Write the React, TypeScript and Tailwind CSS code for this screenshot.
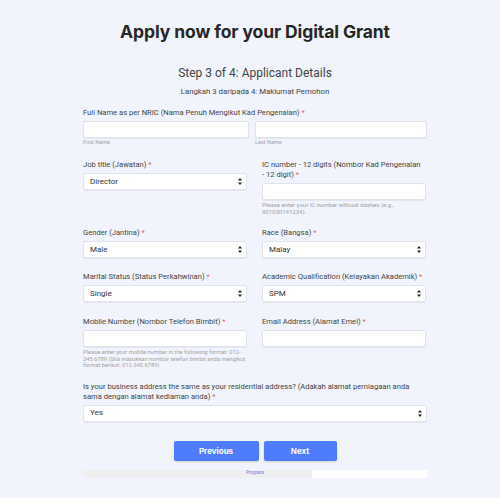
import React from 'react';

const Req = () => <span className="text-[#e5615f]"> *</span>;

const Label: React.FC<{ children: React.ReactNode; required?: boolean }> = ({ children, required }) => (
  <div className="text-[7.6px] leading-[10px] text-[#454545] mb-[3px]">
    {children}
    {required && <Req />}
  </div>
);

const Help: React.FC<{ children: React.ReactNode; small?: boolean }> = ({ children, small }) => (
  <div className={`mt-[2px] leading-[6.5px] text-[#a3a3a3] ${small ? 'text-[5.75px]' : 'text-[6px]'}`}>{children}</div>
);

const Input = () => (
  <div className="h-[17px] bg-white border border-[#e1e3e8] rounded-[2px] shadow-[0_1px_1px_rgba(0,0,0,0.06)]" />
);

const Select: React.FC<{ value: string }> = ({ value }) => (
  <div className="h-[17px] bg-white border border-[#e1e3e8] rounded-[2px] shadow-[0_1px_1px_rgba(0,0,0,0.06)] flex items-center justify-between pl-[6px] pr-[4px]">
    <span className="text-[8px] text-[#333]">{value}</span>
    <svg width="4" height="7" viewBox="0 0 4 7">
      <path d="M2 0 L4 2.6 L0 2.6 Z" fill="#222" />
      <path d="M0 4.4 L4 4.4 L2 7 Z" fill="#222" />
    </svg>
  </div>
);

export default function App() {
  return (
    <div className="min-h-[498px] bg-[#f1f4fc] font-['Roboto',sans-serif] pt-[21px]">
      <div className="ml-[83px] w-[344px]">
        <h1 className="text-center font-['Inter',sans-serif] font-bold text-[17.5px] leading-[22px] text-[#272727] tracking-[-0.1px]">
          Apply now for your Digital Grant
        </h1>
        <h2 className="mt-[22px] text-center text-[12px] leading-[16px] text-[#444]">
          Step 3 of 4: Applicant Details
        </h2>
        <p className="mt-[6px] text-center text-[7.8px] leading-[10px] text-[#444]">
          Langkah 3 daripada 4: Maklumat Pemohon
        </p>

        <div className="mt-[11px]">
          <Label required>Full Name as per NRIC (Nama Penuh Mengikut Kad Pengenalan)</Label>
          <div className="flex gap-[6px]">
            <div className="w-[166px]">
              <Input />
              <div className="text-[5.5px] leading-[8px] text-[#a3a3a3]">First Name</div>
            </div>
            <div className="flex-1">
              <Input />
              <div className="text-[5.5px] leading-[8px] text-[#a3a3a3]">Last Name</div>
            </div>
          </div>
        </div>

        <div className="mt-[14px] grid grid-cols-[164px_164px] gap-x-[15px] gap-y-[13px] items-start">
          <div>
            <Label required>Job title (Jawatan)</Label>
            <Select value="Director" />
          </div>
          <div>
            <Label required>
              IC number - 12 digits (Nombor Kad Pengenalan
              <br />- 12 digit)
            </Label>
            <Input />
            <Help>Please enter your IC number without dashes (e.g., 901030141234).</Help>
          </div>

          <div>
            <Label required>Gender (Jantina)</Label>
            <Select value="Male" />
          </div>
          <div>
            <Label required>Race (Bangsa)</Label>
            <Select value="Malay" />
          </div>

          <div className="mt-[1px]">
            <Label required>Marital Status (Status Perkahwinan)</Label>
            <Select value="Single" />
          </div>
          <div className="mt-[1px]">
            <Label required>Academic Qualification (Kelayakan Akademik)</Label>
            <Select value="SPM" />
          </div>

          <div className="mt-[2px]">
            <Label required>Mobile Number (Nombor Telefon Bimbit)</Label>
            <Input />
            <Help small>
              Please enter your mobile number in the following format: 012-<wbr />345 6789 (Sila masukkan nombor telefon bimbit anda mengikut format berikut: 012-345 6789)
            </Help>
          </div>
          <div className="mt-[2px]">
            <Label>
              Email Address (Alamat Emel) <Req />
            </Label>
            <Input />
          </div>
        </div>

        <div className="mt-[13px]">
          <div className="text-[7.6px] leading-[10px] text-[#454545] mb-[3px]">
            Is your business address the same as your residential address? (Adakah alamat perniagaan anda sama dengan alamat kediaman anda)
            <Req />
          </div>
          <Select value="Yes" />
        </div>

        <div className="mt-[19px] flex justify-center gap-[5px]">
          <button className="w-[85px] h-[20px] bg-[#4e7cfd] rounded-[2px] shadow-[0_1px_2px_rgba(0,0,0,0.15)] text-white font-['Inter',sans-serif] font-bold text-[8px]">
            Previous
          </button>
          <button className="w-[73px] h-[20px] bg-[#4e7cfd] rounded-[2px] shadow-[0_1px_2px_rgba(0,0,0,0.15)] text-white font-['Inter',sans-serif] font-bold text-[8px]">
            Next
          </button>
        </div>

        <div className="relative mt-[9px] h-[8px] bg-white">
          <div className="h-full w-[66.6%] bg-[#efefef]" />
          <div className="absolute inset-0 flex items-center justify-center text-[4.5px] text-[#7b76d8]">Progress</div>
        </div>
      </div>
    </div>
  );
}
